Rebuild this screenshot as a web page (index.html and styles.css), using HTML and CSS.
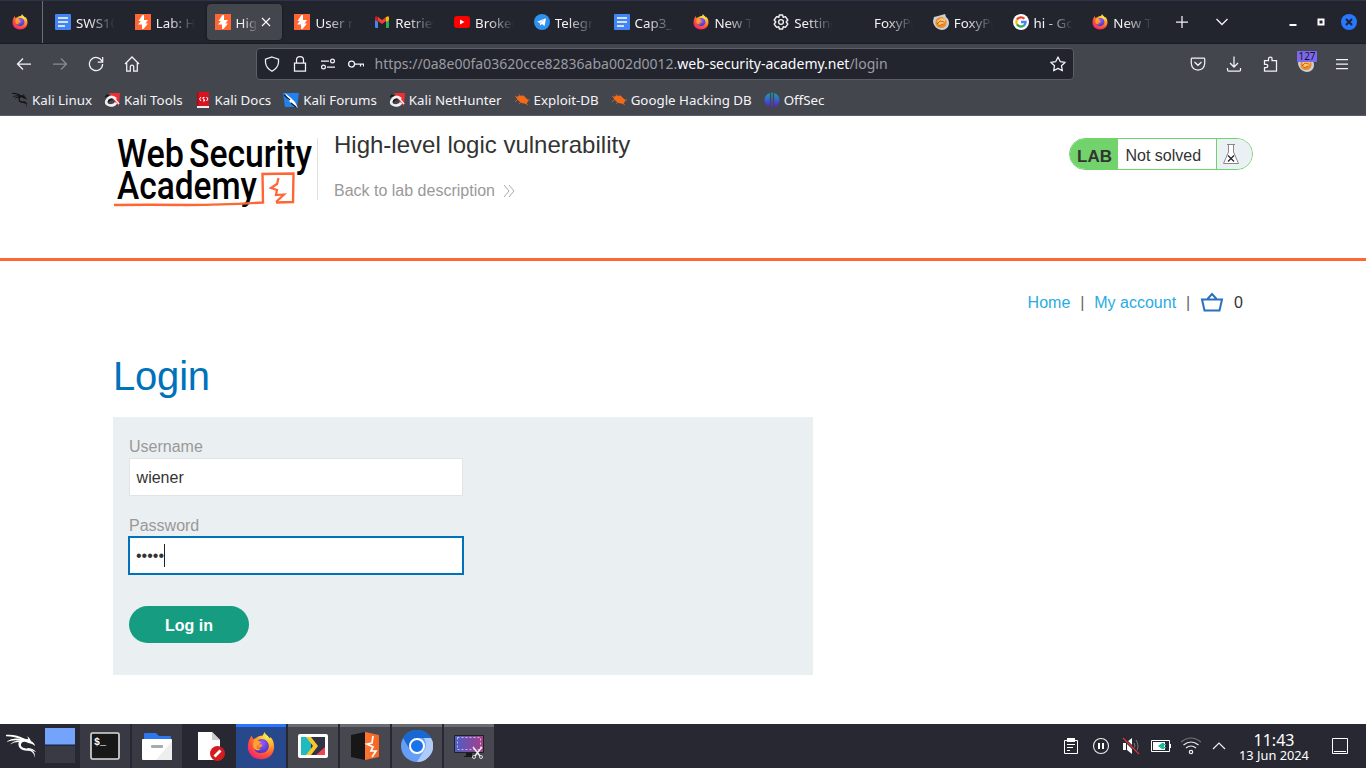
FILE: index.html
```html
<!DOCTYPE html>
<html lang="en">
<head>
<meta charset="utf-8">
<title>High-level logic vulnerability</title>
<link rel="stylesheet" href="styles.css">
</head>
<body>
<svg class="defs" width="0" height="0" aria-hidden="true">
  <defs>
    <radialGradient id="ffBody" cx=".75" cy=".15" r="1"><stop offset="0" stop-color="#fff04d"/><stop offset=".35" stop-color="#ffb02a"/><stop offset=".65" stop-color="#ff5a35"/><stop offset="1" stop-color="#f0187a"/></radialGradient>
    <radialGradient id="ffGlobe" cx=".5" cy=".3" r=".7"><stop offset="0" stop-color="#9a5cff"/><stop offset="1" stop-color="#4a35c0"/></radialGradient>
    <linearGradient id="offsecFill" x2="0" y2="1"><stop offset="0" stop-color="#16a5b5"/><stop offset="1" stop-color="#5b20d8"/></linearGradient>
    <linearGradient id="screenFill" x2="1" y2="0"><stop offset="0" stop-color="#4b5ec8"/><stop offset="1" stop-color="#a83e86"/></linearGradient>
    <linearGradient id="burpSide" x2="1" y2="0"><stop offset="0" stop-color="#ff7433"/><stop offset="1" stop-color="#f4661f"/></linearGradient>
    <symbol id="firefox" viewBox="0 0 32 32"><path fill="url(#ffBody)" d="M3 8l2-4 2 4 3-1c2-2 5-3 8-3l2-4c1 3 4 4 6 7l1-1c3 3 4 7 4 11 0 8-6 14-15 14S1 25 1 17c0-4 1-7 2-9z"/><path fill="url(#ffGlobe)" d="M16 8c6 0 9 4 9 8s-3 8-9 8c-5 0-8-3-8-7 2 3 6 3 8 0 2-1 2-2 0-3-3 0-5-1-5-3 1-1 3-3 5-3z"/><path fill="#ffa52c" d="M10 7c2 2 3 4 6 4-1 3-4 3-5 5-1 3 2 4 5 3-4 4-9 1-9-4 0-3 1-6 3-8z"/></symbol>
    <symbol id="docs" viewBox="0 0 16 16"><rect width="16" height="16" rx="1" fill="#4285f4"/><path stroke="#fff" stroke-width="1.7" d="M3 4h10M3 8h10M3 12h7"/></symbol>
    <symbol id="burp" viewBox="0 0 16 16"><rect width="16" height="16" fill="#ff6633"/><path fill="#fff" d="M7.500 1h1.500v5h4L10.500 9.500H13L8.500 15H7v-4.500H3L5.800 7H3.500z"/></symbol>
    <symbol id="gmail" viewBox="0 0 16 16"><path fill="#4285f4" d="M1 4h3v10H2q-1 0-1-1z"/><path fill="#34a853" d="M12 4h3v9q0 1-1 1h-2z"/><path fill="#ea4335" d="M4 3l4 3 4-3v4l-4 3-4-3z"/><path fill="#fbbc04" d="M12 3.200Q15 1 15 4v2l-3 2z"/><path fill="#c5221f" d="M1 4Q1 1 4 3.200V8L1 6z"/></symbol>
    <symbol id="youtube" viewBox="0 0 16 16"><rect y="2" width="16" height="12" rx="3" fill="#f00"/><path fill="#fff" d="M6 5.500v5L10.500 8z"/></symbol>
    <symbol id="telegram" viewBox="0 0 16 16"><circle cx="8" cy="8" r="8" fill="#2f91ee"/><path fill="#fff" d="M3 7.800l9-3.600L10.600 12 7.800 9.900 6.200 11.500 5.800 9z"/><path stroke="#9ccbf4" d="M6 9l4-3" stroke-width=".7"/></symbol>
    <symbol id="gear" viewBox="0 0 16 16"><path fill="none" stroke="#f1f1f4" stroke-width="1.400" stroke-linejoin="round" d="M6.400 1h3.200l.6 2.200 2.200-.6L14.800 6l-1.600 2 1.600 2-2.400 3.400-2.200-.6-.6 2.200H6.400l-.6-2.200-2.200.6L1.200 10l1.600-2-1.600-2 2.400-3.400 2.200.6z"/><circle cx="8" cy="8" r="2.400" fill="none" stroke="#f1f1f4" stroke-width="1.300"/></symbol>
    <symbol id="foxy" viewBox="0 0 16 16"><path fill="#ccd0d3" d="M1 3l4-1 7-2 1 3q3 2 3 6c0 4-3 7-7 7S0 12 0 7z"/><circle cx="8" cy="8.500" r="5.600" fill="#ef8c2a"/><path fill="#ffc36b" d="M4 7l4-3 5 1-2 4-4 3z"/><path stroke="#a85a22" stroke-width=".8" fill="none" d="M4 10l3-3 4 1M6 12l4-2"/></symbol>
    <symbol id="google" viewBox="0 0 16 16"><circle cx="8" cy="8" r="8" fill="#fff"/><g fill="none" stroke-width="2.300"><path stroke="#ea4335" d="M4 5.600A4.700 4.700 0 0 1 11.400 4.800"/><path stroke="#fbbc05" d="M4 5.500a5 5 0 0 0 0 5"/><path stroke="#34a853" d="M4 10.400a4.700 4.700 0 0 0 7 1"/><path stroke="#4285f4" d="M8 8h4.600q0 2.200-1.600 3.500"/></g></symbol>
    <symbol id="kali" viewBox="0 0 32 26" preserveAspectRatio="none"><g fill="currentColor"><path d="M0 1.500q10-1 19 4l-1 1.500Q9 3 0 3zM1 8q6-4 15-2v1.500Q8 6 1 8.500zM4 11.500q5-5 12-4L15 9q-6-.5-11 2.500z"/><path d="M17 5q4 1 6 1l-1-3q3 2 4 5 3 1 4 5l-3-2-4-1q-6-3-7.500 1c-1 4 4 4.500 8.500 5 5 1 6 5 6 9-2-6-4-7-8-7-7 0-10-4-9-8.500q1-3 4-4.500z"/><path d="M22 15q6 0 9 4l-1.500-.3Q26 16 22 16z"/></g></symbol>
    <symbol id="kalitool" viewBox="0 0 16 16"><path fill="#ef2d35" d="M5 1h11l-1 13-4-4z"/><path fill="none" stroke="#17181b" stroke-width="1.500" d="M1 5l3-2M2 3l3 1M3 12l3 3"/><path fill="none" stroke="#f1f1f1" stroke-width="2.600" d="M12 7Q8 3 4 6.500-.5 12 6 13.500q5 0 6-3"/><path fill="none" stroke="#17181b" stroke-width="1.500" d="M4.500 10q0-3 4-2.500"/><path fill="none" stroke="#f1f1f1" stroke-width="1.500" d="M10 6l5 6"/></symbol>
    <symbol id="kalidocs" viewBox="0 0 16 16"><path fill="#d91420" d="M2 0h12v14H2z"/><path fill="#eee" d="M2 14h12v2H2z"/><path fill="#a50c15" d="M2 0h1.500v14H2z"/><path fill="none" stroke="#fff" stroke-width="1" d="M6 5L4.500 7 6 9M9.500 5.500H8V7l1.500.5V9H8M11.500 5L13 7l-1.500 2"/></symbol>
    <symbol id="forum" viewBox="0 0 16 16"><path fill="#2181ed" d="M0 1h16l-2 14H2z"/><path fill="#fff" d="M2 1l6 5 4 4 3 6-8-6-2-3z"/><path stroke="#151b25" d="M1 3l6 5M8 11l5 4" stroke-width="1.200"/></symbol>
    <symbol id="bug" viewBox="0 0 16 16"><path fill="#f06a18" d="M2 5l4-1.500 4 .5 4.500 4.500-2 3.500-5-1-4-3z"/><path fill="none" stroke="#f06a18" stroke-width=".7" d="M1 4l4 3M5 2l1 4M9 3v2M13 8h3M3 8l-2 2M7 10l-2 2M11 11l3 2"/></symbol>
    <symbol id="offsec" viewBox="0 0 16 16"><g fill="url(#offsecFill)"><path d="M5.800 1Q.5 3 .5 8t5.300 6.500zM10.200 1q5.300 2 5.300 7t-5.300 6.500z"/><path d="M7.300.5h1.400v15H7.300z"/></g></symbol>
  </defs>
</svg>

<header class="browser">
  <div class="tabs">
    <div class="pinned"><svg class="i16"><use href="#firefox"/></svg></div>
    <div class="tab"><svg class="i16"><use href="#docs"/></svg><span>SWS101</span></div>
    <div class="tab"><svg class="i16"><use href="#burp"/></svg><span>Lab: High</span></div>
    <div class="tab active"><svg class="i16"><use href="#burp"/></svg><span>High-level</span><svg class="close" viewBox="0 0 10 10"><path d="M1 1l8 8M9 1L1 9"/></svg></div>
    <div class="tab"><svg class="i16"><use href="#burp"/></svg><span>User role</span></div>
    <div class="tab"><svg class="i16"><use href="#gmail"/></svg><span>Retrieve</span></div>
    <div class="tab"><svg class="i16"><use href="#youtube"/></svg><span>Broken</span></div>
    <div class="tab"><svg class="i16"><use href="#telegram"/></svg><span>Telegram</span></div>
    <div class="tab"><svg class="i16"><use href="#docs"/></svg><span>Cap3_1</span></div>
    <div class="tab"><svg class="i16"><use href="#firefox"/></svg><span>New Tab</span></div>
    <div class="tab"><svg class="i16"><use href="#gear"/></svg><span>Settings</span></div>
    <div class="tab"><i class="i16"></i><span>FoxyProxy</span></div>
    <div class="tab"><svg class="i16"><use href="#foxy"/></svg><span>FoxyProxy</span></div>
    <div class="tab"><svg class="i16"><use href="#google"/></svg><span>hi - Google</span></div>
    <div class="tab"><svg class="i16"><use href="#firefox"/></svg><span>New Tab</span></div>
    <div class="window-tools">
      <svg class="line plus" viewBox="0 0 16 16"><path d="M8 2v12M2 8h12"/></svg>
      <svg class="line caret" viewBox="0 0 16 16"><path d="M2.500 5L8 10.500 13.500 5"/></svg>
      <svg class="wc min" viewBox="0 0 16 16"><path d="M4.500 11h7" stroke="#fff" stroke-width="2"/></svg>
      <svg class="wc max" viewBox="0 0 16 16"><path d="M5.500 5.500h5v5h-5z" fill="none" stroke="#fff" stroke-width="2"/></svg>
      <svg class="wc" viewBox="0 0 16 16"><circle cx="8" cy="8" r="8" fill="#2777ff"/><path d="M5 5l6 6M11 5l-6 6" stroke="#20232d" stroke-width="2"/></svg>
    </div>
  </div>
  <div class="nav">
    <div class="nav-left">
      <svg class="line" viewBox="0 0 16 16"><path d="M15 8H1.500M7 2.500L1.500 8 7 13.500"/></svg>
      <svg class="line dim" viewBox="0 0 16 16"><path d="M1 8h13.500M9 2.500l5.500 5.500L9 13.500"/></svg>
      <svg class="line" viewBox="0 0 16 16"><path d="M14 5.300A6.600 6.600 0 1 0 14.600 8M14.700 1v5h-5"/></svg>
      <svg class="line" viewBox="0 0 16 16"><path d="M1 8l7-7 7 7M2.700 7v8h3.600v-4q0-2 1.700-2t1.700 2v4h3.600V7"/></svg>
    </div>
    <div class="url">
      <svg class="line" viewBox="0 0 16 16"><path d="M8 1l6.500 2.200v3.300Q14 12 8 15.300 2 12 1.500 6.500V3.200z"/></svg>
      <svg class="line" viewBox="0 0 16 16"><path d="M2.500 7h11v8h-11zM4.500 7V4q0-3.300 3.500-3.300T11.500 4v3"/></svg>
      <svg class="line" viewBox="0 0 16 16"><path d="M1 5h8M7 11h8"/><circle cx="12.500" cy="5" r="1.900"/><circle cx="3.500" cy="11" r="1.900"/></svg>
      <svg class="line" viewBox="0 0 16 16"><circle cx="3.600" cy="8" r="3"/><path d="M6.600 8h9v2.500M12.500 8v2.500"/></svg>
      <p class="address">https://0a8e00fa03620cce82836aba002d0012.<b>web-security-academy.net</b>/login</p>
      <svg class="line" viewBox="0 0 16 16"><path stroke-linejoin="round" d="M8 1l2.200 4.600 5 .7-3.700 3.500.9 5L8 12.400 3.600 14.800l.9-5L.8 6.300l5-.7z"/></svg>
    </div>
    <div class="nav-right">
      <svg class="line" viewBox="0 0 16 16"><path d="M1.300 3q0-.8 1-.8h11.400q1 0 1 .8v4.500Q14 14 8 14T1.300 7.500zM4.500 6L8 9.300 11.500 6"/></svg>
      <svg class="line" viewBox="0 0 16 16"><path d="M8 .5v10M4 7l4 4 4-4M1.500 12v2q0 1 1 1h11q1 0 1-1v-2"/></svg>
      <svg class="line" viewBox="0 0 16 16"><path d="M2.500 4.500h4V3q0-2 1.800-2T10 3v1.500h4.500V15h-12v-3.500H4q1.800 0 1.800-1.600T4 8.300H2.500z"/></svg>
      <div class="proxy"><svg class="i16"><use href="#foxy"/></svg><span>127</span></div>
      <svg class="line" viewBox="0 0 16 16"><path d="M2 3.500h12M2 8h12M2 12.500h12"/></svg>
    </div>
  </div>
  <nav class="bookmarks">
    <a><svg class="i16 black"><use href="#kali"/></svg>Kali Linux</a>
    <a><svg class="i16"><use href="#kalitool"/></svg>Kali Tools</a>
    <a><svg class="i16"><use href="#kalidocs"/></svg>Kali Docs</a>
    <a><svg class="i16"><use href="#forum"/></svg>Kali Forums</a>
    <a><svg class="i16"><use href="#kalitool"/></svg>Kali NetHunter</a>
    <a><svg class="i16"><use href="#bug"/></svg>Exploit-DB</a>
    <a><svg class="i16"><use href="#bug"/></svg>Google Hacking DB</a>
    <a><svg class="i16"><use href="#offsec"/></svg>OffSec</a>
  </nav>
</header>

<main class="page">
  <section class="lab-head">
    <div class="wrap lab-row">
      <svg class="logo" viewBox="0 0 204 76">
        <g class="logo-type"><text x="3" y="32.500" textLength="67" lengthAdjust="spacingAndGlyphs">Web</text><text x="75" y="32.500" textLength="123" lengthAdjust="spacingAndGlyphs">Security</text><text x="3" y="65" textLength="140" lengthAdjust="spacingAndGlyphs">Academy</text></g>
        <g fill="none" stroke="#ff6633"><path stroke-width="2.400" d="M0 71q35-.5 74 0 35 0 75-2.500l-.5-28.500 31-.5-.5 28.500-17 .5"/><path stroke-width="2.200" d="M164.500 44l-1.500 6-6 4 6 2-1 5 8-.5-8 7.500"/></g>
      </svg>
      <div class="title">
        <h2>High-level logic vulnerability</h2>
        <a>Back to lab description <svg viewBox="0 0 14 14"><path d="M2 1l5 6-5 6M7 1l5 6-5 6"/></svg></a>
      </div>
      <div class="status"><b>LAB</b><span>Not solved</span><i><svg viewBox="0 0 18 22"><path d="M5 1.500h8M6.500 2v7L1.500 20.500h15l-5-11.500V2"/><path class="cross" d="M6 12.500l6 6M12 12.500l-6 6"/></svg></i></div>
    </div>
  </section>
  <section class="wrap content">
    <nav class="account"><a>Home</a><em>|</em><a>My account</a><em>|</em><svg viewBox="0 0 24 20"><path d="M2 7.500h20l-2.500 11h-15zM7.500 7L12 2l4.500 5"/></svg><span>0</span></nav>
    <h1>Login</h1>
    <form class="login">
      <label for="user">Username</label>
      <div class="field" id="user">wiener</div>
      <label for="pass">Password</label>
      <div class="field focus" id="pass">•••••<i></i></div>
      <button type="button">Log in</button>
    </form>
  </section>
</main>

<footer class="taskbar">
  <svg class="kali-menu" viewBox="0 0 32 26"><use href="#kali"/></svg>
  <div class="pager"><i></i><i></i></div>
  <div class="tasks">
    <div class="task idle"><svg viewBox="0 0 32 32"><rect x="2" y="3" width="28" height="26" rx="1.500" fill="#181818" stroke="#dcdcdc" stroke-width="1.600"/><text x="5" y="15" class="prompt">$_</text></svg></div>
    <div class="task idle"><svg viewBox="0 0 32 32"><path fill="#2d77ee" d="M3 4q0-1 1-1h11l3 3h11q1 0 1 1v8H3z"/><rect x="1" y="9" width="30" height="21" rx="1" fill="#fff"/><path fill="#eee" d="M31 11v19H15z"/><rect x="10" y="15" width="12" height="3" rx="1" fill="#aaa"/></svg></div>
    <div class="task plain"><svg viewBox="0 0 32 32"><path fill="#fff" d="M5 2h14l8 8v20H5z"/><path fill="#ccc" d="M19 2l8 8h-8z"/><circle cx="24.500" cy="23.500" r="7.500" fill="#d41b20"/><path d="M21.500 26.500l6-6" stroke="#fff" stroke-width="2.800"/></svg></div>
    <div class="task selected"><svg viewBox="0 0 32 32"><use href="#firefox" x="2" y="2" width="28" height="28"/></svg></div>
    <div class="task"><svg viewBox="0 0 32 32"><rect x="1" y="4" width="30" height="24" rx="2" fill="#fff"/><path fill="#1ebbc0" d="M4 7h6l7 9-7 9H4z"/><path fill="#303346" d="M14 7h14v18H14z"/><path fill="#f9c72b" d="M9 7h5l7 9-7 9H9l7-9z"/><path fill="#f04450" d="M28 17v8h-9z"/></svg></div>
    <div class="task"><svg viewBox="0 0 32 32"><path fill="#171717" d="M2 5l14-3v28L2 27z"/><path fill="url(#burpSide)" d="M16 2l14 3v22l-14 3z"/><path fill="none" stroke="#fff" stroke-width="1.700" d="M24 6l-1 7-5 1 6 3-2 4 5 0-4 6"/></svg></div>
    <div class="task"><svg viewBox="0 0 32 32"><circle cx="16" cy="16" r="16" fill="#669df6"/><path fill="#1967d2" d="M2 8a16 16 0 0 1 28 0H16l-8 10z"/><path fill="#aecbfa" d="M30 8a16 16 0 0 1-14 24l8-13q2-5-1-11z"/><circle cx="16" cy="16" r="7" fill="#1a73e8" stroke="#fff" stroke-width="2"/></svg></div>
    <div class="task"><svg viewBox="0 0 32 32"><rect x="1" y="5" width="30" height="18" rx="1" fill="#202124"/><rect x="2" y="6" width="28" height="16" fill="url(#screenFill)"/><path fill="none" stroke="#c5bfdd" stroke-dasharray="2 2" d="M4.500 7.500h23v12h-23z"/><path fill="#17181b" d="M13 23h6v3h4v1H11v-1h2z"/><path fill="none" stroke="#eee" stroke-width="1.500" d="M20 17l7 9M29 17l-7 9"/><circle cx="21" cy="27" r="1.500" fill="none" stroke="#ddd"/><circle cx="28" cy="27" r="1.500" fill="none" stroke="#ddd"/></svg></div>
  </div>
  <div class="tray">
    <svg viewBox="0 0 20 20"><path fill="none" stroke="#fff" d="M3.500 4.500h13v13h-13z"/><path fill="#fff" d="M6 2h8v4H6z"/><path stroke="#fff" d="M6 8.500h8M6 11.500h6M6 14.500h3"/></svg>
    <svg viewBox="0 0 20 20"><circle cx="10" cy="10" r="7.500" fill="none" stroke="#eee" stroke-width="1.100"/><path stroke="#fff" stroke-width="2" d="M8 7v6M12 7v6"/></svg>
    <svg viewBox="0 0 20 20"><path fill="#fff" d="M2 7h3v7H2zM6 6l5-4v16l-5-4z"/><path fill="none" stroke="#777" d="M13 7q2 3 0 6M15 4q4 6 0 12"/><path stroke="#272831" stroke-width="3" d="M2 2l16 16"/><path stroke="#e0303a" stroke-width="1.300" d="M2 2l16 16"/></svg>
    <svg viewBox="0 0 20 20"><path fill="none" stroke="#fff" d="M.5 4.500h18v11H.5z"/><path fill="#fff" d="M19 8h1v4h-1zM2 6h12v8H2z"/><path fill="#1abc9c" d="M7 10l4-3h2v6h-2zM13 8h2v1.200h-2zM13 11h2v1.200h-2z"/></svg>
    <svg viewBox="0 0 20 20"><g fill="none" stroke="#eee" stroke-width="1.200"><path stroke="#777" d="M0 6q10-8 20 0"/><path d="M2.500 9q7.500-6 15 0M5 12q5-4 10 0"/><circle cx="10" cy="16" r="1.700"/></g></svg>
    <svg viewBox="0 0 20 20"><path fill="none" stroke="#eee" stroke-width="1.200" d="M4 13l6-6 6 6"/></svg>
  </div>
  <div class="clock"><strong>11:43</strong><span>13 Jun 2024</span></div>
  <svg class="show-desk" viewBox="0 0 16 16"><path fill="none" stroke="#fff" d="M.5.5h15v15H.5zM2 13.500h12"/></svg>
</footer>
</body>
</html>
```

FILE: styles.css
```css
* { box-sizing: border-box; }
body { margin: 0; width: 1366px; height: 768px; overflow: hidden; display: flex; flex-direction: column; background: #fff; font-family: "Noto Sans", sans-serif; }
h1, h2, p { margin: 0; font-weight: 400; }
svg { flex: none; }
.defs { position: absolute; }
.i16 { width: 16px; height: 16px; flex: none; }
.line { width: 16px; height: 16px; fill: none; stroke: #f3f3f6; stroke-width: 1.25; }
.dim { opacity: .4; }

.browser { height: 116px; background: #44464e; color: #f4f4f6; border-bottom: 1px solid #5b5d66; font-size: 13.33px; }
.tabs { height: 44px; display: flex; background: #23252e; border-top: 1px solid #303247; border-bottom: 1px solid #191b22; }
.pinned { width: 43px; border-right: 1px solid #6b6d74; padding: 13px 0 0 12px; margin-right: 4px; }
.tab { width: 79.8px; flex: none; height: 42px; padding: 0 4px 0 8px; display: flex; align-items: center; gap: 5px; }
.tab span { width: 39px; overflow: hidden; white-space: nowrap; line-height: 20px; padding-top: 2px; -webkit-mask-image: linear-gradient(90deg, #000 30%, transparent); mask-image: linear-gradient(90deg, #000 30%, transparent); }
.tab.active { width: 75.8px; height: 36px; margin: 3px 4px 0 0; padding: 0 0 0 8px; background: #44464e; border-radius: 4px; box-shadow: 0 0 3px #15161b; }
.active span { width: 22px; }
.close { width: 10px; height: 10px; margin-left: -2px; stroke: #fff; stroke-width: 1.1; }
.window-tools { display: flex; align-items: center; padding-left: 10px; }
.caret { margin-left: 24px; }
.wc { width: 16px; height: 16px; margin-left: 12px; }
.wc.min { margin-left: 55px; }

.nav { height: 40px; display: flex; align-items: center; }
.nav-left { width: 256px; display: flex; gap: 20px; padding-left: 16px; }
.url { width: 818px; height: 32px; display: flex; align-items: center; gap: 12px; padding: 0 7px; border: 1px solid #5c5e66; border-radius: 4px; background: #23252e; }
.address { flex: 1; margin-left: -1.5px; color: #9b9ca2; font-size: 14px; line-height: 20px; white-space: nowrap; }
.address b { font-weight: 400; color: #fbfbfe; }
.nav-right { display: flex; align-items: center; gap: 20px; padding-left: 116px; }
.proxy { position: relative; width: 16px; height: 16px; }
.proxy span { position: absolute; left: -1px; top: -5px; width: 20px; height: 11px; background: #7c68ee; color: #15141a; border-radius: 1px; font-size: 10px; line-height: 11px; text-align: center; }
.bookmarks { height: 31px; display: flex; align-items: center; padding-left: 12px; gap: 12px; }
.bookmarks a { display: flex; align-items: center; gap: 4px; white-space: nowrap; line-height: 20px; }
.black { color: #111; }

.page { height: 608px; font-family: "Liberation Sans", Arial, sans-serif; color: #333332; }
.wrap { width: 1140px; margin: 0 auto; }
.lab-head { height: 145px; border-bottom: 3px solid #ff6633; }
.lab-row { display: flex; align-items: flex-start; }
.logo { width: 204px; height: 76px; margin-top: 18px; margin-left: 1px; }
.logo-type { font-family: Roboto, sans-serif; font-weight: 500; font-size: 38.5px; fill: #000; }
.title { height: 62px; margin-top: 22px; margin-left: -1px; padding-left: 16px; border-left: 1px solid #e0e0e0; }
.title h2 { font-size: 24px; line-height: 28px; margin-top: -7px; }
.title a { display: flex; align-items: center; gap: 7px; margin-top: 22px; font-size: 16px; line-height: 20px; color: #999; }
.title svg { width: 14px; height: 14px; fill: none; stroke: #aaa; }
.status { margin: 22px 0 0 auto; height: 32px; width: 184px; display: flex; border: 1px solid #72d36d; border-radius: 16px; overflow: hidden; font-size: 16px; line-height: 33px; }
.status b { flex: none; width: 48px; padding-left: 7px; background: #72d36d; font-size: 17px; line-height: 35px; }
.status span { flex: none; width: 99px; padding-left: 7.5px; border-right: 1px solid #72d36d; }
.status i { flex: 1; background: #eaf0f3; padding: 4px 5px; }
.status svg { display: block; width: 18px; height: 22px; fill: #fff; stroke: #888; }
.status .cross { stroke: #222; stroke-width: 1.2; }

.account { display: flex; justify-content: flex-end; align-items: center; height: 20px; margin-top: 32px; padding-right: 10px; font-size: 16px; line-height: 20px; }
.account a { color: #29abe2; }
.account em { width: 24px; text-align: center; font-style: normal; color: #666; }
.account svg { width: 24px; height: 20px; margin-top: -2px; fill: none; stroke: #2871bc; stroke-width: 2; }
.account span { margin-left: 10px; }
.content h1 { margin-top: 40px; height: 64px; font-size: 40px; line-height: 46px; letter-spacing: -.2px; color: #0071bb; }
.login { width: 700px; height: 258px; background: #eaeff2; padding: 20px 16px; font-size: 16px; }
.login label { display: block; line-height: 20px; color: #999; }
.field { width: 334px; height: 38px; margin: 1px 0 20px; padding: 0 6.6px; border: 1px solid #e3e3e3; background: #fff; line-height: 37px; display: flex; align-items: center; }
.field.focus { width: 336px; height: 39px; margin: 0 0 31px -1px; padding: 0 6px; border: 2px solid #0071bb; }
.field i { width: 1px; height: 23px; background: #222; }
.login button { display: block; width: 120px; height: 37px; padding: 2px 0 0; border: 0; border-radius: 19px; background: #169c80; color: #fff; font: bold 16px/35px "Liberation Sans", Arial, sans-serif; }

.taskbar { height: 44px; display: flex; background: #272831; color: #fff; }
.kali-menu { width: 31px; height: 26px; margin: 9px 8px 0 6px; color: #fff; }
.pager { width: 30px; margin: 4px 5px 0 0; }
.pager i { display: block; height: 17px; background: #393a43; }
.pager i:first-child { margin-bottom: 1px; background: #73a3fb; border-bottom: 1px solid #3a67b5; }
.tasks { display: flex; gap: 2px; }
.task { width: 50px; height: 44px; padding: 3px 9px; background: #47484f; border-top: 3px solid #696d71; }
.task svg { display: block; width: 32px; height: 32px; }
.task.idle { background: #383942; border: 0; padding-top: 6px; }
.task.plain { background: none; border: 0; padding-top: 6px; }
.task.selected { background: #27498b; border-color: #2777ff; }
.prompt { font: bold 10px "Liberation Mono", monospace; fill: #fff; }
.tray { display: flex; gap: 10px; margin: 12px 0 0 567px; }
.tray svg { width: 20px; height: 20px; }
.tray svg:last-child { margin-left: -2px; }
.clock { width: 90px; display: flex; flex-direction: column; align-items: center; margin-top: 7px; white-space: nowrap; }
.clock strong { font-size: 16px; font-weight: 400; line-height: 18px; }
.clock span { font-size: 12.8px; line-height: 12px; }
.show-desk { width: 16px; height: 16px; margin: 14px 0 0 13px; }
```
